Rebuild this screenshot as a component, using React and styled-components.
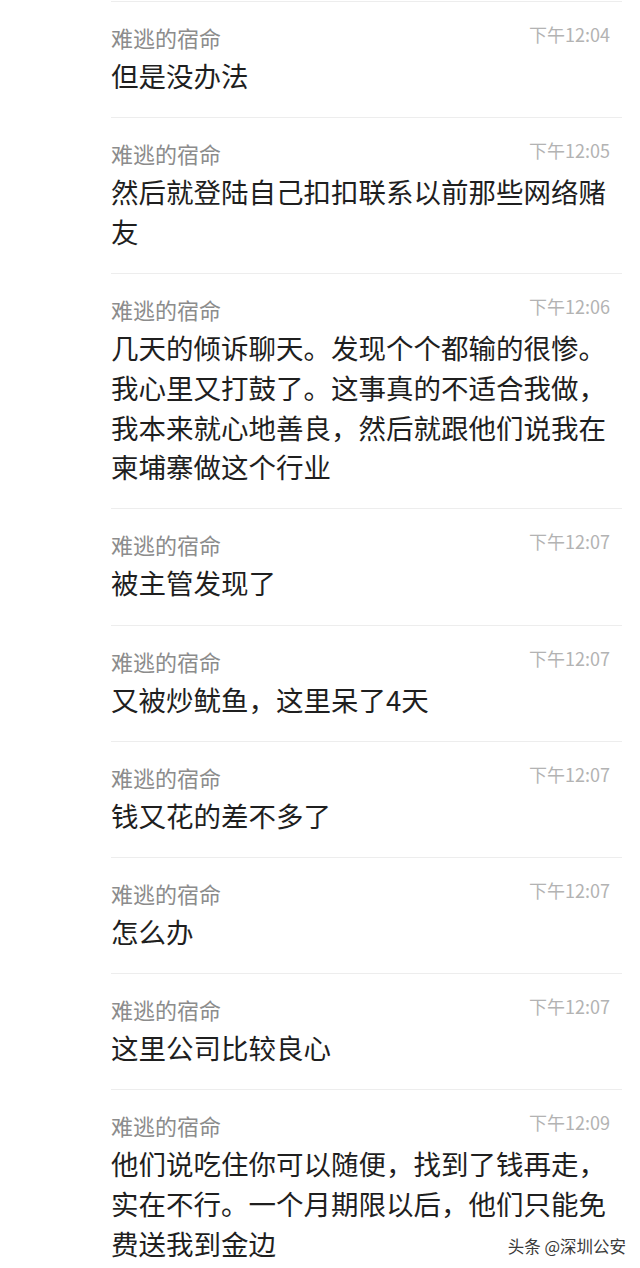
import React from 'react'
import styled, { createGlobalStyle } from 'styled-components';

const GlobalStyle = createGlobalStyle`
body {
  margin: 0;
  background: #ffffff;
  font-family: "Noto Sans CJK SC", "Noto Sans", sans-serif;
}
`

// chat log rows, oldest first
const messages = [
  { time: "下午12:04", text: "但是没办法" },
  { time: "下午12:05", text: "然后就登陆自己扣扣联系以前那些网络赌友" },
  { time: "下午12:06", text: "几天的倾诉聊天。发现个个都输的很惨。我心里又打鼓了。这事真的不适合我做，我本来就心地善良，然后就跟他们说我在柬埔寨做这个行业" },
  { time: "下午12:07", text: "被主管发现了" },
  { time: "下午12:07", text: "又被炒鱿鱼，这里呆了4天" },
  { time: "下午12:07", text: "钱又花的差不多了" },
  { time: "下午12:07", text: "怎么办" },
  { time: "下午12:07", text: "这里公司比较良心" },
  { time: "下午12:09", text: "他们说吃住你可以随便，找到了钱再走，实在不行。一个月期限以后，他们只能免费送我到金边" },
]

const App = () => {
  return (
    <Page>
      <GlobalStyle/>
      <List>
        {messages.map((m, i) => (
          <Row key={i}>
            <Head>
              <Name>难逃的宿命</Name>
              <Time>{m.time}</Time>
            </Head>
            <Text>{m.text}</Text>
          </Row>
        ))}
      </List>
      <Watermark>头条 @深圳公安</Watermark>
    </Page>
  )
}

const Page = styled.div`
position: relative;
width: 640px;
height: 1268px;
overflow: hidden;
background: #fff;
`

const List = styled.div`
display: flex;
flex-direction: column;
padding-top: 1px;
margin-left: 111px;
width: 511px;
`

const Row = styled.div`
border-top: 1px solid #ededed;
padding: 20px 0 21.5px 0;
display: flex;
flex-direction: column;
gap: 4px;
`

const Head = styled.div`
display: flex;
justify-content: space-between;
align-items: flex-start;
padding-right: 12px;
`

const Name = styled.span`
font-size: 22px;
line-height: 30px;
color: #8c8c8c;
`

const Time = styled.span`
font-size: 18px;
line-height: 24px;
color: #b3b3b3;
`

const Text = styled.div`
width: 500px;
font-size: 27.5px;
line-height: 39.7px;
color: #1f1f1f;
`

const Watermark = styled.div`
position: absolute;
right: 14px;
bottom: 10px;
font-size: 16.5px;
line-height: 24px;
color: #3a3a3a;
text-shadow: 1px 0 0 #fff, -1px 0 0 #fff, 0 1px 0 #fff, 0 -1px 0 #fff;
`

export default App;
